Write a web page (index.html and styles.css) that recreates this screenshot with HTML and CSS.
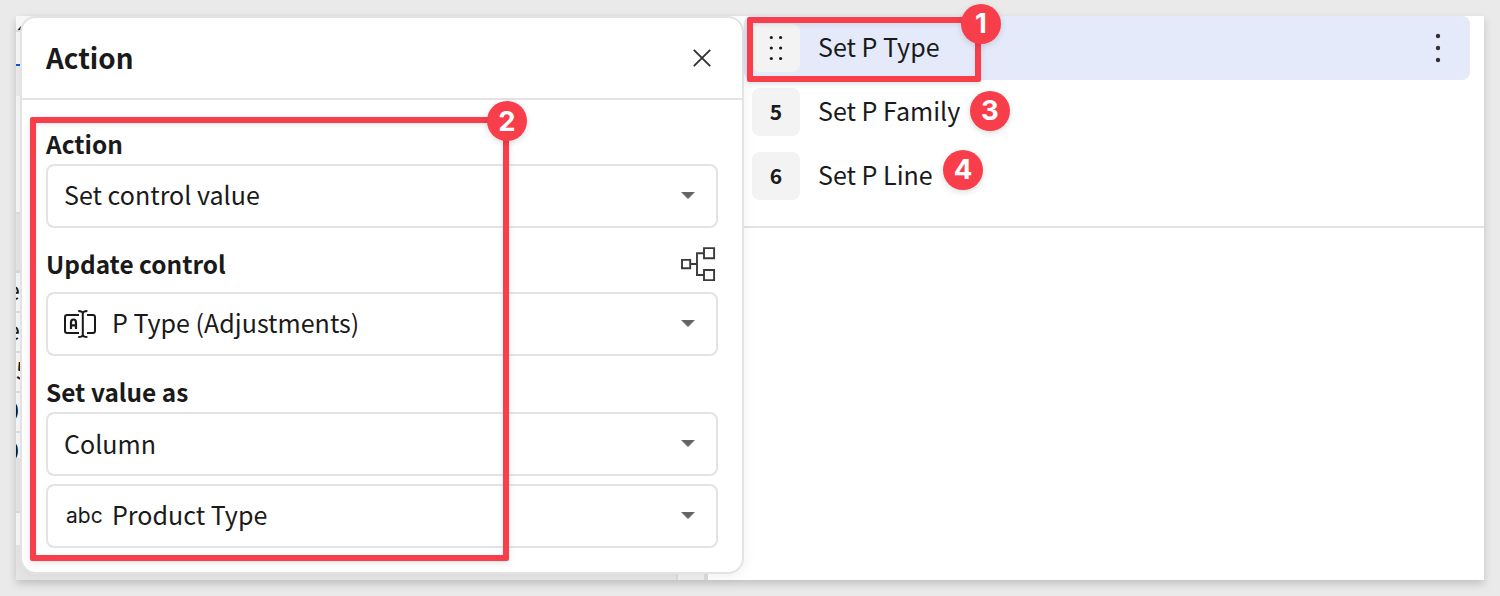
FILE: index.html
```html
<!DOCTYPE html>
<html lang="en">
<head>
<meta charset="utf-8">
<title>Action</title>
<link rel="stylesheet" href="styles.css">
</head>
<body>
<main class="window">
  <div class="sheet">
    <div class="sheet-head"><svg width="5" height="14" viewBox="0 0 5 14"><path d="M1.5 14 5 10v4z" fill="#222"/></svg></div>
    <div class="sheet-tab"></div>
    <div class="sheet-bar"></div>
    <div class="sheet-gap"></div>
    <div class="sheet-band"></div>
    <div class="cell"><span>e</span></div>
    <div class="cell"><span>e</span></div>
    <div class="cell cut-left"><span>5</span></div>
    <div class="cell zero"><span>0</span></div>
    <div class="cell zero last"><span>0</span></div>
    <div class="sheet-band low"></div>
    <div class="sheet-foot"></div>
  </div>
  <div class="gutter"></div>
  <section class="sequence">
    <div class="step selected">
      <div class="chip">
        <svg width="14" height="26" viewBox="0 0 14 26" fill="#1a1a1a"><circle cx="2.3" cy="2.5" r="1.6"/><circle cx="11.6" cy="2.5" r="1.6"/><circle cx="2.3" cy="13" r="1.6"/><circle cx="11.6" cy="13" r="1.6"/><circle cx="2.3" cy="23.5" r="1.6"/><circle cx="11.6" cy="23.5" r="1.6"/></svg>
      </div>
      <span class="text">Set P Type</span>
      <svg class="more" width="6" height="30" viewBox="0 0 6 30" fill="#333"><circle cx="3" cy="3" r="2.2"/><circle cx="3" cy="15" r="2.2"/><circle cx="3" cy="27" r="2.2"/></svg>
    </div>
    <div class="step"><div class="chip"><span class="text">5</span></div><span class="text">Set P Family</span></div>
    <div class="step"><div class="chip"><span class="text">6</span></div><span class="text">Set P Line</span></div>
  </section>
</main>

<section class="dialog">
  <header class="dialog-head">
    <h1>Action</h1>
    <svg width="18" height="18" viewBox="0 0 18 18" fill="none" stroke="#333" stroke-width="1.9"><path d="M.8.8 17.2 17.2M17.2.8.8 17.2"/></svg>
  </header>
  <div class="form">
    <div class="label first"><span>Action</span></div>
    <div class="select"><span class="text">Set control value</span><i class="caret"></i></div>
    <div class="label second"><span>Update control</span>
      <svg width="36" height="36" viewBox="0 0 36 36" fill="none" stroke="#3a3a3a" stroke-width="1.9"><path d="M2 13.9h8.2v8.4H2zM24 2.1h10.1v10.1H24zM24 24h10.1v10.1H24zM10.2 18H17M24 7.2h-7V29h7"/></svg>
    </div>
    <div class="select">
      <svg class="type-icon" width="34" height="30" viewBox="0 0 34 30" fill="none" stroke="#1a1a1a" stroke-width="2"><path d="M16 6H4.2Q2 6 2 8.2v13.6Q2 24 4.2 24H16M24 6h5.8Q32 6 32 8.2v13.6Q32 24 29.8 24H24"/><path d="M15.2 2q4.6 0 4.6 2.5v21q0 2.5-4.6 2.5M24.4 2q-4.6 0-4.6 2.5v21q0 2.5 4.6 2.5"/><path d="M8 20v-6.5q0-3 2.5-3t2.5 3V20M8 16.3h5" stroke-width="2.2"/></svg>
      <span class="text">P Type (Adjustments)</span><i class="caret"></i>
    </div>
    <div class="label third"><span>Set value as</span></div>
    <div class="select"><span class="text source">Column</span><i class="caret"></i></div>
    <div class="select stacked"><span class="abc">abc</span><span class="text">Product Type</span><i class="caret"></i></div>
  </div>
</section>

<div class="mark mark-step"></div>
<div class="mark mark-form"></div>
<div class="badge b1">1</div>
<div class="badge b2">2</div>
<div class="badge b3">3</div>
<div class="badge b4">4</div>
</body>
</html>
```
FILE: styles.css
```css
* { box-sizing: border-box; }
body {
  margin: 0;
  padding: 16px;
  height: 596px;
  position: relative;
  overflow: hidden;
  background: #eaeaea;
  color: #1a1a1a;
  font: 25.05px/40px "Noto Sans CJK JP", "Noto Sans", sans-serif;
  white-space: nowrap;
}
svg { display: block; flex: none; }
.window {
  display: flex;
  width: 1468px;
  height: 564px;
  background: #fff;
  overflow: hidden;
  box-shadow: 0 4px 8px rgba(0, 0, 0, .17);
}
.sheet { width: 660px; background: #e6e6e6; }
.sheet > div { width: 4px; overflow: hidden; background: #f8f8f8; }
.sheet .sheet-head { height: 16px; width: 30px; border-bottom: 2px solid #e0e0e0; }
.sheet .sheet-tab { height: 34px; border-bottom: 2px solid #0b57d8; }
.sheet .sheet-bar { height: 30px; background: #ececec; }
.sheet .sheet-gap { height: 118px; border-bottom: 2px solid #e0e0e0; }
.sheet .sheet-band { height: 59px; background: #e6e6e6; border-bottom: 3px solid #dcdcdc; }
.sheet .cell { height: 40px; border-bottom: 2px solid #e0e0e0; display: flex; justify-content: flex-end; line-height: 32px; }
.sheet .cut-left { justify-content: flex-start; }
.sheet .zero { padding-right: 1px; font-weight: 500; }
.sheet .last { height: 25px; border: 0; }
.sheet .low { height: 55px; border-bottom: 2px solid #dcdcdc; }
.sheet .sheet-foot { height: 32px; }
.gutter { width: 32px; background: #f0f0f0; border-left: 2px solid #dcdcdc; border-right: 4px solid #dcdcdc; }
.sequence { flex: none; width: 776px; height: 212px; padding-left: 36px; border-bottom: 2px solid #e3e3e3; }
.step { display: flex; align-items: center; width: 726px; height: 64px; padding: 0 29px 0 8px; border-radius: 8px; }
.selected { background: #e4eafa; }
.chip {
  display: flex; align-items: center; justify-content: center;
  width: 48px; height: 48px; margin-right: 18px;
  border-radius: 8px; background: #f3f3f3;
  font-size: 21px; font-weight: 700;
}
.text { padding-bottom: 5px; }
.text.source { padding-bottom: 3px; }
.chip .text { padding-bottom: 2px; }
.more { margin-left: auto; }
.dialog {
  position: absolute; left: 20px; top: 16px;
  width: 724px; height: 558px;
  border: 2px solid #e3e3e3; border-radius: 16px;
  background: #fff; background-clip: padding-box;
  box-shadow: 0 3px 14px rgba(0, 0, 0, .06);
}
.dialog-head {
  display: flex; align-items: center; justify-content: space-between;
  height: 82px; padding: 0 31px 0 24px; border-bottom: 2px solid #e3e3e3;
}
.dialog-head h1 { margin: 0; padding-bottom: 2px; font-size: 27.8px; line-height: 40px; font-weight: 700; }
.form { padding: 0 24px; }
.label { display: flex; align-items: center; justify-content: space-between; padding-right: 2px; font-weight: 700; font-size: 24.4px; }
.first { height: 64px; padding-top: 23px; }
.second { height: 64px; padding-top: 7px; }
.third { height: 56px; padding-top: 15px; }
.select {
  display: flex; align-items: center; width: 672px; height: 64px; padding: 0 21px 0 16px;
  border: 2px solid #e3e3e3; border-radius: 8px;
}
.stacked { margin-top: 8px; }
.caret { margin: 0 0 1px auto; border: 7px solid transparent; border-top-color: #666; border-bottom: 0; }
.type-icon { margin: 0 15px 0 -1px; }
.abc { width: 48px; padding-left: 2px; font: 21px/30px Inter, sans-serif; }
.mark { position: absolute; border: 6px solid #f83e4b; border-radius: 2px; box-shadow: 0 2px 6px rgba(0,0,0,.12), inset 0 2px 5px rgba(0,0,0,.08); }
.mark-step { left: 747px; top: 17px; width: 234px; height: 65px; }
.mark-form { left: 30px; top: 117px; width: 479px; height: 444px; }
.badge {
  position: absolute; width: 40px; height: 40px; border-radius: 50%;
  background: #f83e4b; color: #fff; text-align: center;
  font: 700 27.5px/39px Inter, sans-serif; box-shadow: 0 2px 6px rgba(0,0,0,.14);
}
.b1 { left: 961px; top: 4px; }
.b2 { left: 487px; top: 101px; line-height: 40px; }
.b3 { left: 970px; top: 91px; }
.b4 { left: 943px; top: 150px; }
```
